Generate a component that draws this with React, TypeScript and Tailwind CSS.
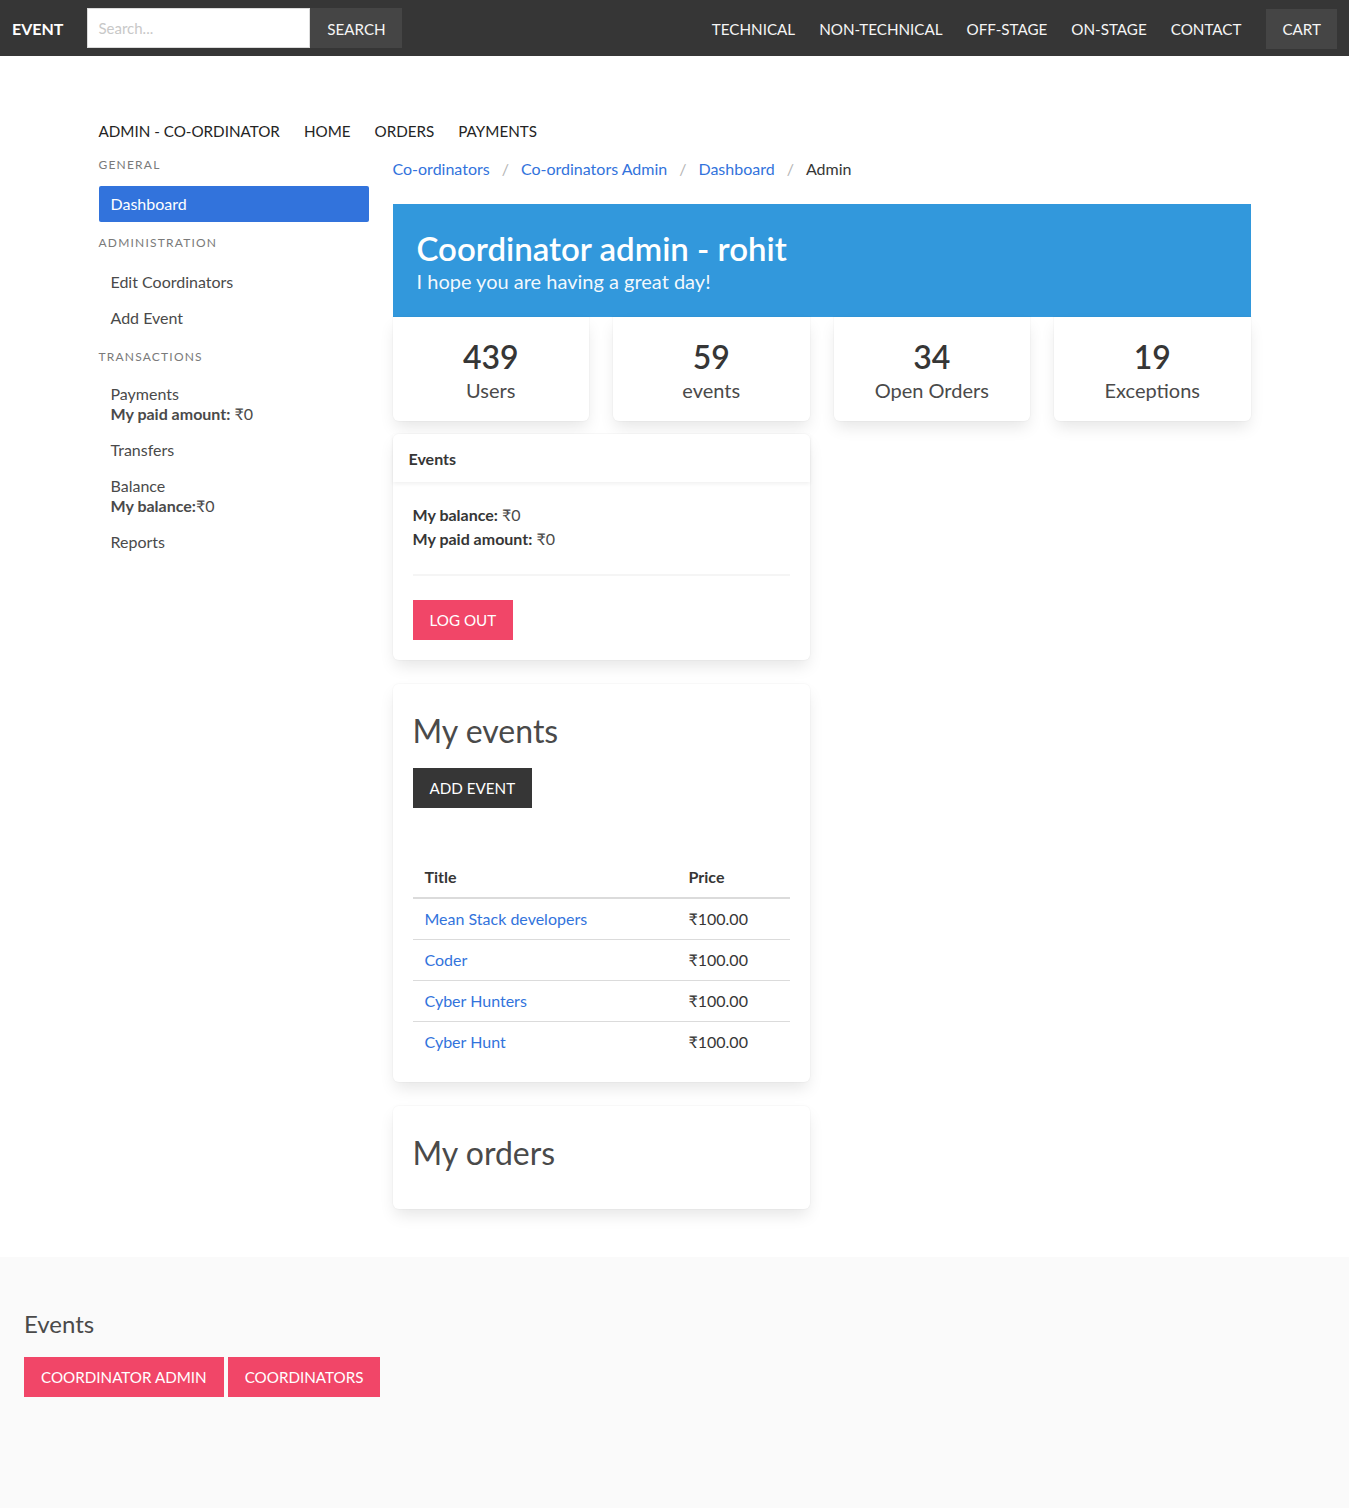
import React from 'react';

const navLinks = ['TECHNICAL', 'NON-TECHNICAL', 'OFF-STAGE', 'ON-STAGE', 'CONTACT'];

const stats = [
  { value: '439', label: 'Users' },
  { value: '59', label: 'events' },
  { value: '34', label: 'Open Orders' },
  { value: '19', label: 'Exceptions' },
];

const myEvents = ['Mean Stack developers', 'Coder', 'Cyber Hunters', 'Cyber Hunt'];

const cardShadow =
  'shadow-[0_8px_16px_-2px_rgba(10,10,10,0.1),0_0_0_1px_rgba(10,10,10,0.02)]';

const MenuLabel: React.FC<{ children: React.ReactNode; className?: string }> = ({ children, className }) => (
  <p className={`text-[12px] leading-[18px] tracking-[0.1em] uppercase text-[#7a7a7a] mb-3 ${className ?? ''}`}>
    {children}
  </p>
);

const MenuItem: React.FC<{ children: React.ReactNode; active?: boolean; tight?: boolean }> = ({
  children,
  active,
  tight,
}) => (
  <li>
    <a
      className={`block px-3 leading-5 rounded-[2px] ${tight ? 'pt-[6px] pb-2' : 'py-2'} ${
        active ? 'bg-[#3273dc] text-white' : 'text-[#4a4a4a]'
      }`}
    >
      {children}
    </a>
  </li>
);

export default function App() {
  return (
    <div className="min-h-[1508px] bg-white text-[16px] text-[#4a4a4a]" style={{ fontFamily: "Lato, 'Noto Sans', sans-serif" }}>
      {/* Navbar */}
      <nav className="h-14 bg-[#363636] flex items-center pl-3 pr-3 text-[15.2px]">
        <span className="font-bold text-white mr-6 text-[16px] pt-[2px]">EVENT</span>
        <div className="flex h-10">
          <input
            className="w-[223px] h-10 bg-white border border-[#dbdbdb] px-[10px] text-[15px] text-[#363636] placeholder:text-[#c8c8c8] outline-none"
            placeholder="Search..."
          />
          <button className="h-10 w-[92px] pt-[2px] bg-[#454545] text-[#f5f5f5]">SEARCH</button>
        </div>
        <div className="ml-auto flex items-center pt-[2px]">
          {navLinks.map((l) => (
            <a key={l} className="px-3 text-[#f5f5f5]">
              {l}
            </a>
          ))}
          <a className="ml-[13px] h-10 flex items-center px-4 bg-[#454545] text-[#f5f5f5]">CART</a>
        </div>
      </nav>

      {/* Main */}
      <main className="w-[1152px] mx-auto pt-[63px] pb-12">
        <div className="flex gap-6 leading-6 text-[15.2px] text-[#242424]">
          <a>ADMIN - CO-ORDINATOR</a>
          <a>HOME</a>
          <a>ORDERS</a>
          <a>PAYMENTS</a>
        </div>

        <div className="flex gap-6 mt-[9px]">
          {/* Sidebar */}
          <aside className="w-[270px] shrink-0 pt-1">
            <MenuLabel>General</MenuLabel>
            <ul>
              <MenuItem active>Dashboard</MenuItem>
            </ul>
            <MenuLabel className="mt-3">Administration</MenuLabel>
            <ul>
              <MenuItem>Edit Coordinators</MenuItem>
              <MenuItem>Add Event</MenuItem>
            </ul>
            <MenuLabel className="mt-3">Transactions</MenuLabel>
            <ul>
              <MenuItem tight>
                <span className="block h-5">Payments</span>
                <span className="block h-5">
                  <strong className="font-bold">My paid amount:</strong> ₹0
                </span>
              </MenuItem>
              <MenuItem>Transfers</MenuItem>
              <MenuItem>
                <span className="block h-5">Balance</span>
                <span className="block h-5">
                  <strong className="font-bold">My balance:</strong>₹0
                </span>
              </MenuItem>
              <MenuItem>Reports</MenuItem>
            </ul>
          </aside>

          {/* Content */}
          <section className="flex-1">
            <nav className="pt-[5px] mb-[23px] leading-6 flex items-center">
              <a className="text-[#3273dc]">Co-ordinators</a>
              <span className="px-3 text-[#b5b5b5]">/</span>
              <a className="text-[#3273dc]">Co-ordinators Admin</a>
              <span className="px-3 text-[#b5b5b5]">/</span>
              <a className="text-[#3273dc]">Dashboard</a>
              <span className="px-3 text-[#b5b5b5]">/</span>
              <span className="text-[#363636]">Admin</span>
            </nav>

            <div className="bg-[#3298dc] px-6 pt-6 pb-[22px] text-white">
              <h1 className="text-[33px] leading-10 font-semibold">Coordinator admin - rohit</h1>
              <h2 className="text-[20px] leading-7 -mt-[1px] text-white/95">I hope you are having a great day!</h2>
            </div>

            <div className="grid grid-cols-4 gap-6">
              {stats.map((s) => (
                <div key={s.label} className={`bg-white rounded-b-md pt-5 pb-4 text-center ${cardShadow}`}>
                  <p className="text-[32px] leading-10 font-semibold text-[#363636]">{s.value}</p>
                  <p className="text-[20px] leading-7 -mt-[1px] pb-[1px] text-[#4a4a4a]">{s.label}</p>
                </div>
              ))}
            </div>

            <div className="w-[417px] mt-[13px] flex flex-col gap-6">
              {/* Events card */}
              <div className={`bg-white rounded-md ${cardShadow}`}>
                <header className="h-12 flex items-center px-4 pt-[2px] shadow-[0_2px_4px_rgba(10,10,10,0.06)]">
                  <p className="font-bold text-[#363636]">Events</p>
                </header>
                <div className="px-5 pt-[21px] pb-5">
                  <p className="h-6 leading-6">
                    <strong className="font-bold text-[#363636]">My balance:</strong> ₹0
                  </p>
                  <p className="h-6 leading-6">
                    <strong className="font-bold text-[#363636]">My paid amount:</strong> ₹0
                  </p>
                  <hr className="mt-[23px] mb-6 h-[2px] border-0 bg-[#f5f5f5]" />
                  <button className="h-10 px-[17px] text-[15.2px] bg-[#f14668] text-white">LOG OUT</button>
                </div>
              </div>

              {/* My events card */}
              <div className={`bg-white rounded-md px-5 pt-[27px] pb-5 ${cardShadow}`}>
                <h2 className="text-[32px] leading-10 text-[#4a4a4a]">My events</h2>
                <button className="mt-[17px] h-10 px-[17px] text-[15.2px] bg-[#363636] text-white">ADD EVENT</button>
                <table className="mt-[49px] w-full border-collapse leading-6">
                  <thead>
                    <tr className="border-b-2 border-[#dbdbdb]">
                      <th className="w-[264px] px-3 py-2 text-left font-bold text-[#363636]">Title</th>
                      <th className="px-3 py-2 text-left font-bold text-[#363636]">Price</th>
                    </tr>
                  </thead>
                  <tbody>
                    {myEvents.map((e, i) => (
                      <tr key={e} className={i < myEvents.length - 1 ? 'border-b border-[#dbdbdb]' : ''}>
                        <td className="px-3 py-2 h-10 text-[#3273dc]">{e}</td>
                        <td className="px-3 py-2 h-10 text-[#363636]">₹100.00</td>
                      </tr>
                    ))}
                  </tbody>
                </table>
              </div>

              {/* My orders card */}
              <div className={`bg-white rounded-md px-5 pt-[27px] pb-[36px] ${cardShadow}`}>
                <h2 className="text-[32px] leading-10 text-[#4a4a4a]">My orders</h2>
              </div>
            </div>
          </section>
        </div>
      </main>

      {/* Footer */}
      <footer className="bg-[#fafafa] px-6 pt-[51px] pb-[111px]">
        <h3 className="text-[24px] leading-8 text-[#4a4a4a]">Events</h3>
        <div className="mt-[17px] flex gap-1 text-[15.2px]">
          <button className="h-10 px-[17px] bg-[#f14668] text-white">COORDINATOR ADMIN</button>
          <button className="h-10 px-[17px] bg-[#f14668] text-white">COORDINATORS</button>
        </div>
      </footer>
    </div>
  );
}
